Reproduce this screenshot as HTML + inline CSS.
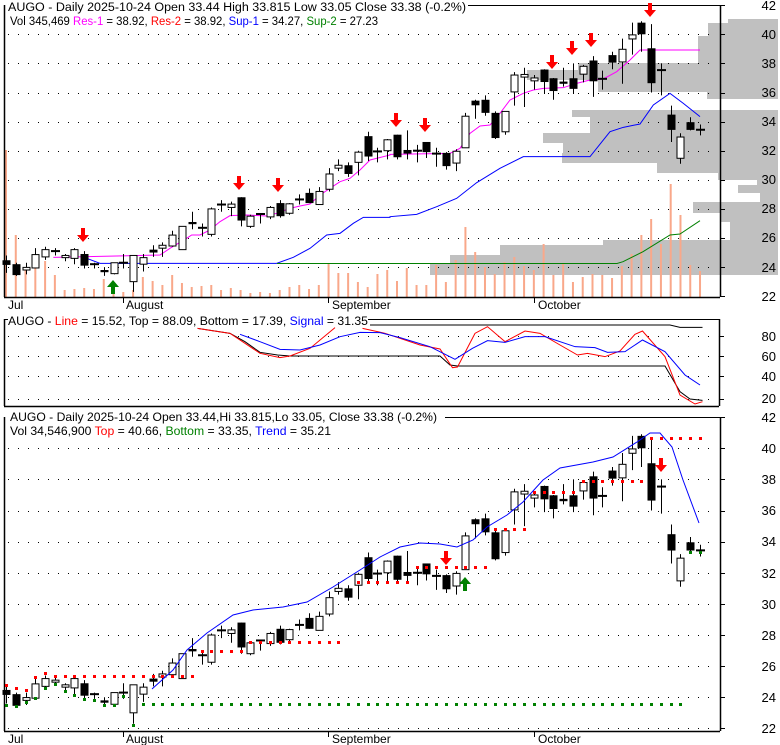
<!DOCTYPE html>
<html><head><meta charset="utf-8"><style>
html,body{margin:0;padding:0;background:#fff;}
svg{display:block;font-family:"Liberation Sans",Arial,sans-serif;}
</style></head><body>
<svg id="s" width="780" height="745" viewBox="0 0 780 745" xmlns="http://www.w3.org/2000/svg">
<rect width="780" height="745" fill="#fff"/>
<g id="bg"></g>
<g id="fg"></g>
<!-- top titles -->
<text x="8" y="11" font-size="12.2" fill="#000" textLength="458" lengthAdjust="spacingAndGlyphs">AUGO - Daily 2025-10-24 Open 33.44  High 33.815  Low 33.05  Close 33.38 (-0.2%)</text>
<text x="10" y="25" font-size="12.2" fill="#000" textLength="368" lengthAdjust="spacingAndGlyphs">Vol 345,469 <tspan fill="#ff00ff">Res-1</tspan> = 38.92, <tspan fill="#ff0000">Res-2</tspan> = 38.92, <tspan fill="#0000ff">Sup-1</tspan> = 34.27, <tspan fill="#008000">Sup-2</tspan> = 27.23</text>
<!-- x labels -->
<g font-size="12" fill="#000">
<text x="8" y="309">Jul</text><text x="126" y="309">August</text><text x="332" y="309">September</text><text x="538" y="309">October</text>
<text x="8" y="743">Jul</text><text x="126" y="743">August</text><text x="332" y="743">September</text><text x="538" y="743">October</text>
</g>
<text x="8" y="325" font-size="12" fill="#000" textLength="360" lengthAdjust="spacingAndGlyphs">AUGO - <tspan fill="#ff0000">Line</tspan> = 15.52, Top = 88.09, Bottom = 17.39, <tspan fill="#0000ff">Signal</tspan> = 31.35</text>
<text x="10" y="421" font-size="12" fill="#000" textLength="427" lengthAdjust="spacingAndGlyphs">AUGO - Daily 2025-10-24 Open 33.44,Hi 33.815,Lo 33.05, Close 33.38 (-0.2%)</text>
<text x="10" y="435" font-size="12" fill="#000" textLength="321" lengthAdjust="spacingAndGlyphs">Vol 34,546,900 <tspan fill="#ff0000">Top</tspan> = 40.66, <tspan fill="#008000">Bottom</tspan> = 33.35, <tspan fill="#0000ff">Trend</tspan> = 35.21</text>
<g font-size="13" fill="#000" text-anchor="end">
<text x="776" y="10">42</text><text x="776" y="39">40</text><text x="776" y="68">38</text><text x="776" y="97">36</text><text x="776" y="126">34</text><text x="776" y="155">32</text><text x="776" y="184">30</text><text x="776" y="213">28</text><text x="776" y="242">26</text><text x="776" y="272">24</text><text x="776" y="301">22</text>
<text x="776" y="341">80</text><text x="776" y="361">60</text><text x="776" y="381">40</text><text x="776" y="403">20</text>
<text x="776" y="422">42</text><text x="776" y="453">40</text><text x="776" y="484">38</text><text x="776" y="515">36</text><text x="776" y="546">34</text><text x="776" y="578">32</text><text x="776" y="609">30</text><text x="776" y="640">28</text><text x="776" y="671">26</text><text x="776" y="702">24</text><text x="776" y="733">22</text>
</g>
</svg>
<script>
var NS="http://www.w3.org/2000/svg";
var bg=document.getElementById("bg"),fg=document.getElementById("fg");
function el(p,t,a){var e=document.createElementNS(NS,t);for(var k in a)e.setAttribute(k,a[k]);p.appendChild(e);return e;}
function pl(p,pts,c,w){el(p,"polyline",{points:pts.map(function(q){return q[0]+","+q[1]}).join(" "),fill:"none",stroke:c,"stroke-width":w||1});}
var D=[[24.47,24.8,23.6,24.15],[24.2,24.3,23.4,23.45],[23.8,24.3,23.5,23.98],[23.94,25.3,23.9,24.86],[24.7,25.4,24.5,25.2],[24.97,25.3,24.8,25.1],[24.65,24.9,24.4,24.8],[24.6,25.3,24.2,25.2],[24.9,25.1,23.9,24.1],[24.2,24.3,23.9,24.1],
[23.8,24.0,23.4,23.65],[23.55,24.3,23.5,24.3],[24.2,24.9,23.9,24.3],[23.0,24.8,22.3,24.8],[24.2,24.9,23.7,24.65],[25.2,25.5,24.7,25.0],[25.3,25.7,24.7,25.5],[25.45,26.5,25.4,26.2],[25.2,26.8,25.2,26.8],[27.1,27.8,26.6,26.95],
[26.7,27.0,26.1,26.6],[26.25,28.1,26.1,28.0],[28.3,28.6,27.8,28.25],[28.1,28.5,27.5,28.33],[28.8,28.8,26.8,27.2],[26.8,27.6,26.7,27.5],[27.6,27.7,27.0,27.65],[27.45,28.2,27.3,28.1],[28.4,28.6,27.4,27.5],[27.7,28.4,27.6,28.35],
[28.6,29.0,28.3,28.65],[29.1,29.4,28.4,28.4],[28.3,29.5,28.3,29.2],[29.35,30.8,29.2,30.4],[30.8,31.4,30.6,31.0],[31.0,31.2,30.2,30.4],[31.2,32.0,30.3,31.9],[33.0,33.3,31.3,31.6],[31.85,32.2,31.2,31.95],[32.0,32.8,31.4,32.75],
[33.1,33.1,31.4,31.55],[32.05,33.4,31.4,31.8],[32.0,32.4,31.2,32.0],[32.6,32.6,31.5,31.9],[31.8,32.2,30.9,31.75],[31.85,31.9,30.7,30.94],[31.15,32.1,30.6,31.96],[32.2,34.6,32.2,34.37],[35.44,35.5,34.2,35.12],[35.5,35.8,34.4,34.6],
[34.6,34.7,32.8,32.87],[33.3,34.7,33.1,34.7],[36.04,37.4,35.1,37.2],[37.06,37.7,35.0,37.24],[36.8,37.2,36.2,37.0],[37.58,37.6,35.9,36.72],[36.98,37.0,35.5,36.1],[36.75,37.7,36.4,36.6],[36.98,38.0,35.9,36.25],[37.26,37.9,36.7,37.8],
[38.2,38.5,35.7,36.77],[36.94,37.5,36.2,36.94],[38.57,38.8,37.6,38.05],[38.1,39.7,36.6,38.97],[39.68,40.8,38.6,39.96],[40.8,40.9,38.8,40.0],[39.04,40.7,36.0,36.64],[37.54,38.0,35.8,37.54],[34.48,35.1,32.6,33.43],[31.48,33.2,31.1,32.94],
[33.96,34.3,33.4,33.43],[33.44,33.8,33.05,33.38]];
var V=[150,235,270,267,261,275,290,289,288,289,279,293,292,290,277,281,285,275,283,287,286,285,290,288,290,293,292,293,290,287,285,289,285,263,273,273,282,287,274,270,281,268,285,285,265,282,260,227,252,267,274,262,257,266,270,244,275,264,282,277,274,275,278,266,254,235,219,244,184,215,265,271];
function X(i){return 6+i*9.775;}
function yt(p){return 34.3+(40-p)*14.55;}
function yb(p){return 448.3+(40-p)*15.56;}
// volume profile (top)
var P=[[19,23,728],[23,36,708],[36,63,698],[63,70,578],[70,80,527],[80,92,598],[92,99,707],[110,117,572],[117,133,590],[133,143,543],[143,153,563],[153,163,562],[163,173,657],[173,180,718],[180,185,757],[185,193,738],[193,202,760],[202,213,693],[213,222,720],[222,240,730],[240,245,603],[245,255,500],[255,263,450],[263,275,430]];
P.forEach(function(r){el(bg,"rect",{x:r[2],y:r[0],width:778-r[2],height:r[1]-r[0],fill:"#c0c0c0"});});
// grids
function grid(y,x1,x2){el(bg,"line",{x1:x1,x2:x2,y1:y+0.5,y2:y+0.5,stroke:"#000","stroke-dasharray":"1 9"});}
for(var p=24;p<=40;p+=2){grid(Math.round(yt(p)),8,718);}
for(var p=22;p<=40;p+=2){grid(Math.round(yb(p)),8,718);}
[336,356,376,399].forEach(function(y){grid(y,8,718);});
// volume
V.forEach(function(v,i){el(bg,"rect",{x:X(i)-1,y:v,width:2,height:297-v,fill:"#f9a88a"});});
// frames
function frame(y1,y2,tx){el(fg,"polyline",{points:"4,"+(y1+6)+" 4,"+y1+" 10,"+y1,fill:"none",stroke:"#000"});
el(fg,"line",{x1:tx,x2:720,y1:y1+0.5,y2:y1+0.5,stroke:"#000"});
el(fg,"rect",{x:4.5,y:y1+0.5,width:715,height:y2-y1,fill:"none",stroke:"#000","stroke-width":1,"stroke-dasharray":"0 "+(y2-y1+715)+" "+(y2-y1+715)*2});}
function box(x1,y1,x2,y2){el(fg,"line",{x1:x1+0.5,y1:y1,x2:x1+0.5,y2:y2,stroke:"#000","stroke-width":1.5});el(fg,"line",{x1:x2+0.5,y1:y1,x2:x2+0.5,y2:y2,stroke:"#000","stroke-width":1.5});el(fg,"line",{x1:x1,y1:y2+0.5,x2:x2,y2:y2+0.5,stroke:"#000","stroke-width":1.5});}
box(4,5,720,297);el(fg,"line",{x1:468,x2:720,y1:5.5,y2:5.5,stroke:"#000"});
box(4,319,719,406);el(fg,"line",{x1:368,x2:719,y1:319.5,y2:319.5,stroke:"#000"});el(fg,"line",{x1:4,x2:8,y1:319.5,y2:319.5,stroke:"#000"});
box(4,417,720,731);el(fg,"line",{x1:445,x2:720,y1:417.5,y2:417.5,stroke:"#000"});
[5,297,417,731].forEach(function(){});
// axis ticks
for(var p=22;p<=42;p+=2){var a=Math.round(yt(p))+0.5,b=Math.round(yb(p))+0.5;el(fg,"line",{x1:720,x2:725,y1:a,y2:a,stroke:"#000"});el(fg,"line",{x1:720,x2:725,y1:b,y2:b,stroke:"#000"});}
[336,356,376,399].forEach(function(y){el(fg,"line",{x1:719,x2:724,y1:y+0.5,y2:y+0.5,stroke:"#000"});});
[123,328,534].forEach(function(x){el(fg,"line",{x1:x+0.5,x2:x+0.5,y1:297,y2:303,stroke:"#000"});el(fg,"line",{x1:x+0.5,x2:x+0.5,y1:731,y2:737,stroke:"#000"});});
// top lines
function sc(a,ox,oy,sx,sy){return a.map(function(q){return [ox+q[0]/sx,oy+q[1]/sy];});}
pl(fg,sc([[160,772],[480,765],[510,745],[560,715],[575,705],[600,705],[630,690],[660,665],[690,647],[740,645],[800,648],[830,640],[870,625],[900,618],[930,612],[960,585],[990,565],[1020,545],[1050,535],[1080,510],[1110,480],[1170,465]],0,0,3,3).concat(sc([[0,463],[180,460],[210,445],[240,400],[270,378],[300,375],[330,340],[360,300],[400,280],[430,270],[460,265],[520,263],[560,250],[600,240],[640,237],[680,215],[720,180],[750,150],[930,150]],390,0,3,3)),"#ff00ff",1);
pl(fg,sc([[260,775],[300,790],[830,790],[880,772],[930,745],[980,705],[1020,700],[1060,670],[1090,652],[1170,652]],0,0,3,3).concat(sc([[0,650],[80,643],[140,620],[200,595],[260,548],[330,505],[400,470],[600,470],[660,395],[700,382],[750,372],[790,315],[840,280],[880,310],[930,350]],390,0,3,3)),"#0000ff",1);
pl(fg,[[277,263.5],[617,263.5],[623,261.7],[643,251.7],[670,235],[680,234],[700,220.7]],"#008000",1);
// candles
function candles(f){D.forEach(function(d,i){var x=Math.round(X(i))+0.5,o=f(d[0]),h=f(d[1]),l=f(d[2]),c=f(d[3]);
el(fg,"line",{x1:x,x2:x,y1:h,y2:l,stroke:"#000"});
var t=Math.min(o,c),bh=Math.abs(o-c);
if(bh<2){el(fg,"rect",{x:x-4.5,y:t-1,width:9,height:2,fill:"#000"});}
else if(d[3]<d[0]){el(fg,"rect",{x:x-4,y:t,width:8,height:bh,fill:"#000"});}
else{el(fg,"rect",{x:x-3.5,y:t,width:7,height:bh,fill:"#fff",stroke:"#000"});}});}
candles(yt);candles(yb);
// arrows
function dn(x,y){el(fg,"polygon",{points:(x-2)+","+y+" "+(x+2)+","+y+" "+(x+2)+","+(y+7)+" "+(x+6)+","+(y+7)+" "+x+","+(y+14)+" "+(x-6)+","+(y+7)+" "+(x-2)+","+(y+7),fill:"#ff0000"});}
function up(x,y){el(fg,"polygon",{points:(x-2)+","+(y+14)+" "+(x+2)+","+(y+14)+" "+(x+2)+","+(y+7)+" "+(x+6)+","+(y+7)+" "+x+","+y+" "+(x-6)+","+(y+7)+" "+(x-2)+","+(y+7),fill:"#008000"});}
[[83,228],[239,176],[278,178],[396,113],[425,118],[552,55],[572,41],[591,33],[650,3]].forEach(function(a){dn(a[0],a[1]);});
up(113,280);
dn(446,551);dn(661,458);up(465,577);
// bottom dots
function dot(i,y,c){el(fg,"rect",{x:Math.round(X(i))-1,y:y-1,width:3,height:3,fill:c});}
[[0,685],[1,688],[2,690],[3,677],[4,673]].forEach(function(a){dot(a[0],a[1],"#ff0000");});
function rng(a,b,y,c){for(var i=a;i<=b;i++)dot(i,y,c);}
rng(5,19,676,"#ff0000");rng(20,24,651,"#ff0000");rng(25,34,642,"#ff0000");rng(36,41,582,"#ff0000");rng(42,49,567,"#ff0000");rng(50,53,529,"#ff0000");rng(54,58,492,"#ff0000");rng(59,65,481,"#ff0000");rng(66,71,438,"#ff0000");
[[0,705],[1,706],[2,702],[3,698],[4,688],[5,684],[6,691],[7,695],[8,699],[9,700],[10,705],[11,705],[12,696],[13,725]].forEach(function(a){dot(a[0],a[1],"#008000");});
rng(14,69,704,"#008000");dot(70,552,"#008000");dot(71,552,"#008000");
pl(fg,[[152,689],[173,670],[187,650],[207,633],[233,615],[253,610],[283,607],[307,602],[333,587],[360,570],[380,557],[400,547],[420,543],[440,544],[457,547],[473,540],[487,527],[507,515],[523,502],[543,480],[560,468],[593,462],[613,457],[637,442],[650,433],[660,433],[672,447],[683,480],[699,523]],"#0000ff",1);
// middle
function m(a){return a.map(function(q){return [q[0]/2,295+q[1]/3];});}
pl(fg,m([[395,100],[460,115],[490,140],[520,172],[555,180],[580,183],[880,183],[900,210],[915,213],[1330,213],[1360,290],[1380,312],[1405,316]]),"#000",1);
pl(fg,m([[740,90],[1340,90],[1360,97],[1405,97]]),"#000",1);
pl(fg,m([[395,100],[460,115],[520,175],[560,188],[580,183],[620,160],[670,98]]),"#ff0000",1);
pl(fg,m([[725,100],[770,115],[840,150],[880,162],[905,218],[915,216],[950,115],[975,95],[1010,140],[1050,108],[1080,115],[1120,150],[1155,180],[1175,175],[1210,185],[1240,168],[1270,118],[1285,108],[1330,185],[1360,300],[1390,327],[1405,320]]),"#ff0000",1);
pl(fg,m([[480,118],[520,140],[560,163],[600,165],[640,150],[680,125],[720,112],[760,113],[800,128],[860,155],[910,193],[945,160],[975,137],[1010,142],[1050,125],[1090,125],[1150,155],[1190,158],[1215,172],[1250,170],[1285,135],[1330,170],[1370,240],[1400,270]]),"#0000ff",1);
</script>
</body></html>
